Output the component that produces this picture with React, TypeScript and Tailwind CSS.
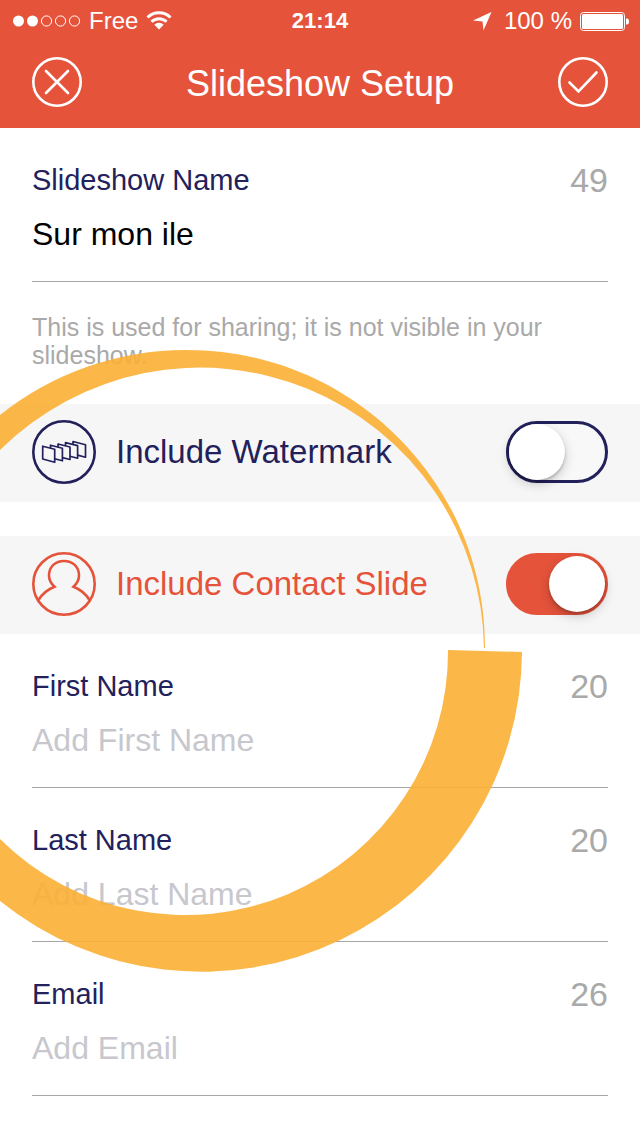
import React, { useState } from 'react';

interface FieldProps {
    id: string;
    label: string;
    placeholder?: string;
    initialValue?: string;
    type?: string;
    limit: number;
}

const Field: React.FC<FieldProps> = ({ id, label, placeholder, initialValue = '', type = 'text', limit }) => {
    const [value, setValue] = useState(initialValue);

    return (
        <div className="mx-8 flex flex-col gap-3 border-b border-[#a6a6a6] pt-8 pb-[25px]">
            <div className="flex h-10 items-center justify-between">
                <label htmlFor={id} className="text-[29px] leading-10 text-[#23215b]">
                    {label}
                </label>
                <span className="text-[34px] leading-10 text-[#a9a9a9]">{limit}</span>
            </div>
            <input
                id={id}
                type={type}
                value={value}
                placeholder={placeholder}
                onChange={(e) => setValue(e.target.value)}
                className="block h-11 w-full bg-transparent text-[32px] text-black outline-none placeholder:text-[#c7c7cd]"
            />
        </div>
    );
};

interface ToggleRowProps {
    id: string;
    label: string;
    icon: React.ReactNode;
    initialChecked?: boolean;
}

const ToggleRow: React.FC<ToggleRowProps> = ({ id, label, icon, initialChecked = false }) => {
    const [checked, setChecked] = useState(initialChecked);

    return (
        <div className={`flex items-center gap-5 bg-[#f6f6f6] px-8 pt-4 pb-[18px] ${checked ? 'text-[#e5533b]' : 'text-[#23215b]'}`}>
            {icon}
            <label htmlFor={id} className="flex-1 text-[33px] leading-10">
                {label}
            </label>
            <input
                id={id}
                type="checkbox"
                role="switch"
                checked={checked}
                onChange={(e) => setChecked(e.target.checked)}
                className="h-[62px] w-[102px] shrink-0 cursor-pointer appearance-none rounded-full border-[3px] border-[#23215b] bg-[#f8f8f8] before:block before:size-14 before:rounded-full before:bg-white before:shadow-[0_4px_12px_rgba(0,0,0,0.2),0_2px_3px_rgba(0,0,0,0.2)] before:content-[''] checked:border-[#e5533b] checked:bg-[#e5533b] checked:before:ml-10"
            />
        </div>
    );
};

const WatermarkIcon = () => (
    <svg viewBox="0 0 64 64" className="size-16 shrink-0" fill="none" stroke="currentColor" strokeLinejoin="round" aria-hidden="true">
        <circle cx="32" cy="32" r="30.7" strokeWidth="2.6" />
        <g strokeWidth="1.7">
            <path d="M10.700 26.200 22.700 29.300V42.300L10.700 39Z" />
            <path d="M18.500 28V25.200L30.400 28.200V40.800L22.700 38.800" />
            <path d="M26 27V24L38 27V39.500L30.400 37.600" />
            <path d="M33.500 25.700V22.700L45.600 25.700V38.200L38 36.300" />
            <path d="M41 24.500V21.500L53.500 24.700V37.200L45.600 35.100" />
        </g>
    </svg>
);

const ContactIcon = () => (
    <svg viewBox="0 0 64 64" className="size-16 shrink-0" fill="none" stroke="currentColor" strokeWidth="2.6" aria-hidden="true">
        <circle cx="32" cy="32" r="30.7" />
        <path d="M6.500 48C10 42 15.500 37.500 22.500 34.700C19 31.500 17 28.500 17 23.500C17 14.500 23.500 9 32 9C40.500 9 47 14.500 47 23.500C47 28.500 45 31.500 41.500 34.700C48.500 37.500 54 42 57.500 48" />
    </svg>
);

const StatusBar = () => (
    <div className="grid h-[42px] grid-cols-3 items-center text-[24px] leading-10">
        <div className="flex items-center gap-2 pl-3">
            <svg viewBox="0 0 69 12" className="h-3 w-[69px]" fill="none" stroke="white" aria-hidden="true">
                <circle cx="6.500" cy="6" r="5.500" fill="white" stroke="none" />
                <circle cx="20.500" cy="6" r="5.500" fill="white" stroke="none" />
                <circle cx="34.500" cy="6" r="5.100" />
                <circle cx="48.500" cy="6" r="5.100" />
                <circle cx="62.500" cy="6" r="5.100" />
            </svg>
            <span>Free</span>
            <svg viewBox="0 0 26 19" className="mb-0.5 h-[19px] w-[26px]" fill="none" stroke="white" aria-hidden="true">
                <path d="M1.500 6.500A16.500 16.500 0 0 1 24.500 6.500" strokeWidth="3" />
                <path d="M5.500 10.800A10.500 10.500 0 0 1 20.500 10.800" strokeWidth="3" />
                <path d="M13 18.500 8.300 13.700A6.700 6.700 0 0 1 17.700 13.700Z" fill="white" stroke="none" />
            </svg>
        </div>
        <span className="text-center text-[22px] font-bold">21:14</span>
        <div className="flex items-center justify-end gap-2 pr-[10px]">
            <svg viewBox="0 0 20 20" className="mr-1 size-5" fill="white" aria-hidden="true">
                <path d="M19.500 1 11.500 19.500 10.500 10.500 1 9.500Z" />
            </svg>
            <span className="whitespace-nowrap">100 %</span>
            <svg viewBox="0 0 50 19" className="h-[19px] w-[50px]" fill="white" aria-hidden="true">
                <rect x="0.500" y="0.500" width="44" height="18" rx="3" fill="none" stroke="white" />
                <rect x="2" y="2" width="41" height="15" rx="1.500" />
                <path d="M46 6.500H47Q49 6.500 49 9.500T47 12.500H46Z" />
            </svg>
        </div>
    </div>
);

// Decorative ring that runs off the left edge of the screen
const Ring = () => (
    <svg
        viewBox="0 350 523 622"
        className="pointer-events-none absolute top-[350px] left-0 h-[622px] w-[523px] overflow-visible"
        fill="#fbaf34"
        fillOpacity="0.9"
        aria-hidden="true"
    >
        <path d="M485 648C486 485 353 350 187 350A298 298 0 0 0 0 415V450A284 284 0 0 1 484 648Z" />
        <path d="M448 650 522 652A321 321 0 0 1 0 901V839A263 263 0 0 0 448 650Z" />
    </svg>
);

export default function App() {
    return (
        <div className="relative min-h-screen overflow-hidden bg-white font-['Liberation_Sans',Arial,sans-serif]">
            <header className="bg-[#e5533b] pb-1 text-white">
                <StatusBar />
                <div className="flex items-center justify-between px-8 pt-[15px] pb-[17px]">
                    <button type="button" aria-label="Cancel" className="size-[50px]">
                        <svg viewBox="0 0 50 50" fill="none" stroke="white" strokeWidth="2.600" strokeLinecap="round">
                            <circle cx="25" cy="25" r="23.700" />
                            <path d="M14 14 36 36M36 14 14 36" />
                        </svg>
                    </button>
                    <h1 className="pt-1 text-[36px] leading-10">Slideshow Setup</h1>
                    <button type="button" aria-label="Save" className="size-[50px]">
                        <svg viewBox="0 0 50 50" fill="none" stroke="white" strokeWidth="2.600" strokeLinecap="round">
                            <circle cx="25" cy="25" r="23.700" />
                            <path d="M11.500 25.500 20.500 34.500 38.500 15.500" />
                        </svg>
                    </button>
                </div>
            </header>

            <main>
                <Field id="slideshow-name" label="Slideshow Name" initialValue="Sur mon ile" limit={49} />
                <p className="px-8 pt-[31px] pb-[35px] text-[25px] leading-7 text-[#a9a9a9]">
                    This is used for sharing; it is not visible in your slideshow.
                </p>

                <div className="flex flex-col gap-[34px]">
                    <ToggleRow id="watermark" label="Include Watermark" icon={<WatermarkIcon />} />
                    <ToggleRow id="contact-slide" label="Include Contact Slide" icon={<ContactIcon />} initialChecked />
                </div>

                <Field id="first-name" label="First Name" placeholder="Add First Name" limit={20} />
                <Field id="last-name" label="Last Name" placeholder="Add Last Name" limit={20} />
                <Field id="email" label="Email" placeholder="Add Email" type="email" limit={26} />
            </main>

            <Ring />
        </div>
    );
}
